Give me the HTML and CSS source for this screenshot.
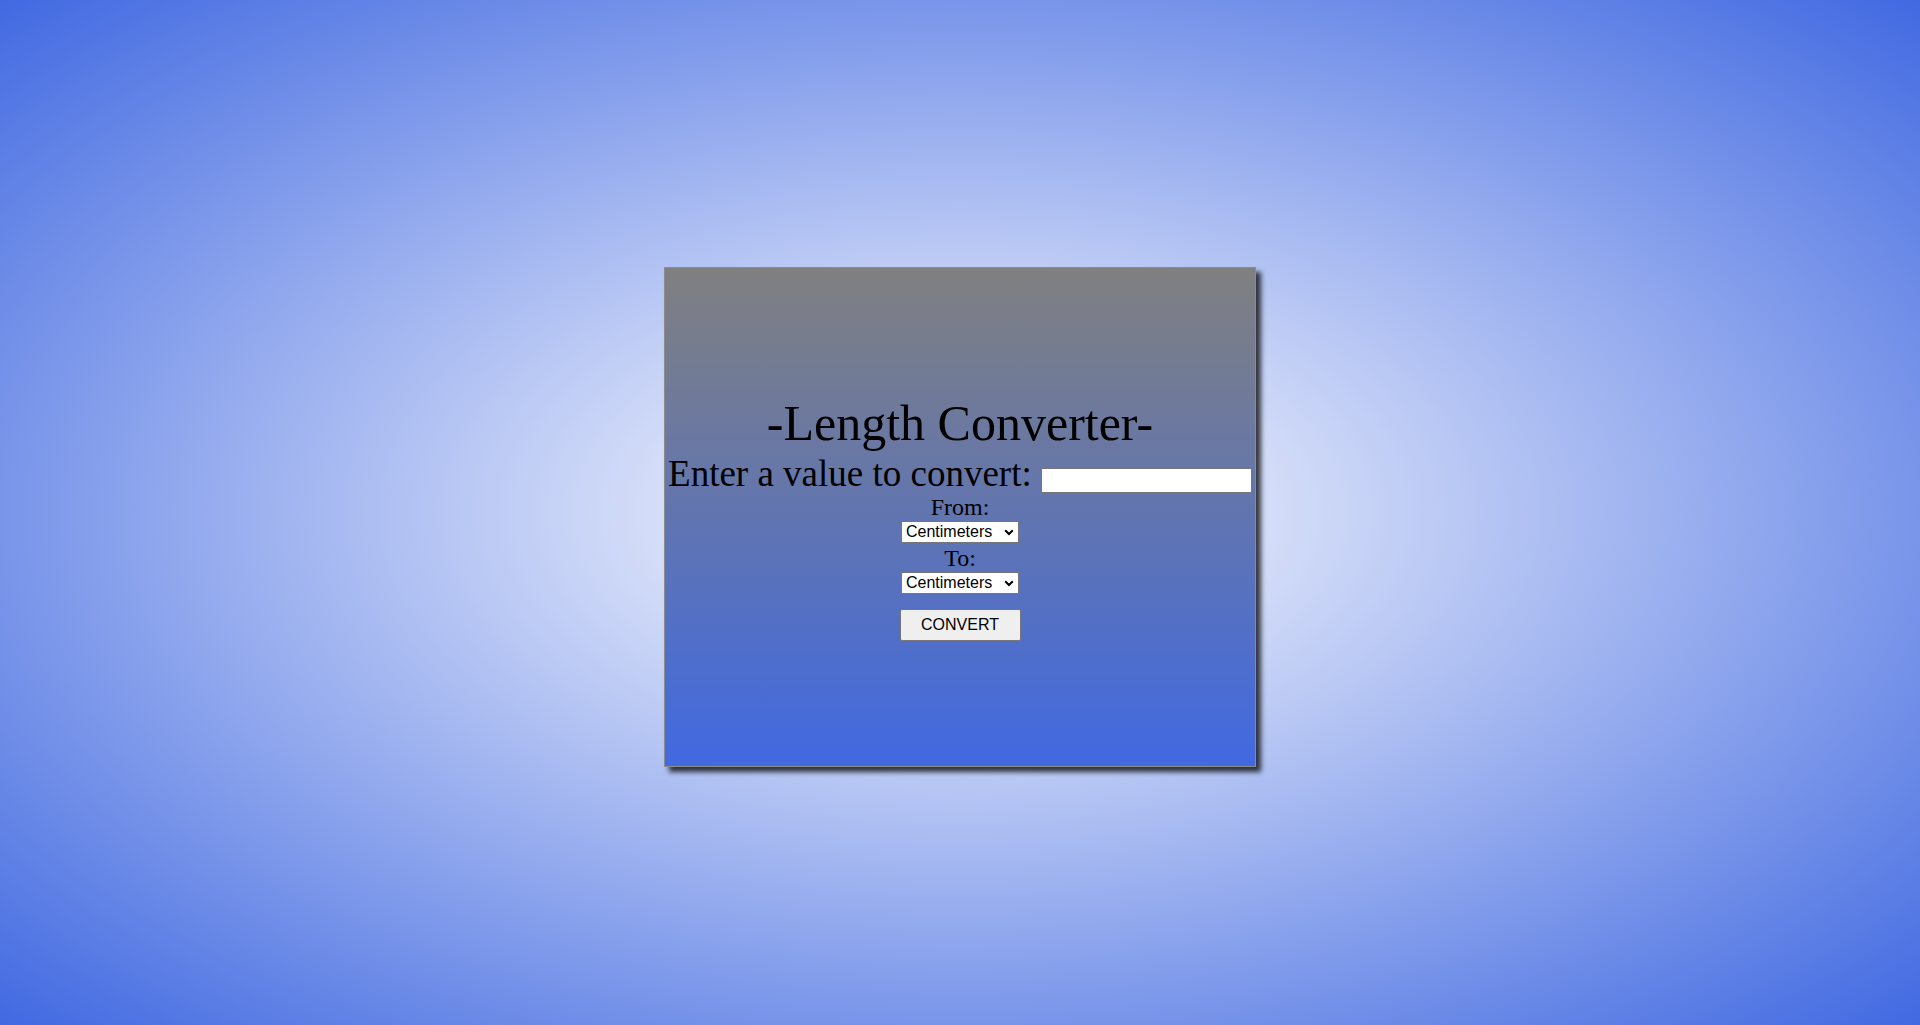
FILE: index.html
```html
<!DOCTYPE html>
<html lang="en">
<head>
<meta charset="utf-8">
<title>Length Converter</title>
<link rel="stylesheet" href="styles.css">
</head>
<body>
  <main class="card">
    <h1 class="title">-Length Converter-</h1>
    <div class="value-row">
      <label class="value-label" for="value">Enter a value to convert:</label> <input class="value-input" id="value" type="text">
    </div>
    <label class="unit-label unit-label-first" for="from">From:</label>
    <select class="unit-select" id="from">
      <option>Centimeters</option>
      <option>Meters</option>
      <option>Kilometers</option>
      <option>Inches</option>
      <option>Feet</option>
    </select>
    <label class="unit-label" for="to">To:</label>
    <select class="unit-select" id="to">
      <option>Centimeters</option>
      <option>Meters</option>
      <option>Kilometers</option>
      <option>Inches</option>
      <option>Feet</option>
    </select>
    <button class="convert-btn" type="button">CONVERT</button>
  </main>
</body>
</html>
```

FILE: styles.css
```css
html, body {
  margin: 0;
  height: 100%;
}

body {
  box-sizing: border-box;
  padding-top: 9px;
  display: flex;
  align-items: center;
  justify-content: center;
  background: radial-gradient(white, royalblue);
  font-family: "Liberation Serif", "Times New Roman", serif;
  color: #000;
}

.card {
  box-sizing: border-box;
  width: 592px;
  height: 500px;
  border: 1px solid #8c8c8c;
  background: linear-gradient(gray, royalblue);
  box-shadow: 5px 5px 5px rgba(0, 0, 0, 0.75);
  display: flex;
  flex-direction: column;
  align-items: center;
  justify-content: center;
  text-align: center;
}

.title {
  margin: 0;
  padding-top: 4px;
  font-size: 50px;
  font-weight: normal;
  line-height: 53px;
}

.value-row {
  white-space: nowrap;
  font-size: 37px;
  line-height: 41px;
  margin-top: 3px;
}

.value-label {
  font-size: 37px;
}

.value-input {
  box-sizing: border-box;
  width: 211px;
  height: 25px;
  font-family: "Liberation Sans", Arial, sans-serif;
  font-size: 16px;
  padding: 1px 2px;
  border: 1px solid #767676;
  background: #fff;
  vertical-align: 1px;
}

.unit-label {
  font-size: 24px;
  line-height: 27px;
  margin-top: 2px;
}

.unit-label-first {
  margin-top: 0;
}

.unit-select {
  box-sizing: border-box;
  -webkit-appearance: none;
  appearance: none;
  width: 118px;
  height: 22px;
  font-family: "Liberation Sans", Arial, sans-serif;
  font-size: 16px;
  line-height: 18px;
  color: #000;
  background-color: #fff;
  background-image: url("data:image/svg+xml,%3Csvg xmlns='http://www.w3.org/2000/svg' width='10' height='7' viewBox='0 0 10 7'%3E%3Cpath d='M1.2 1.2 L5 5 L8.8 1.2' fill='none' stroke='%23000' stroke-width='2'/%3E%3C/svg%3E");
  background-repeat: no-repeat;
  background-position: right 4px center;
  background-size: 10px 7px;
  border: 1px solid #767676;
  border-radius: 0;
  padding: 1px 18px 1px 4px;
}

.convert-btn {
  box-sizing: border-box;
  margin-top: 15px;
  width: 121px;
  height: 32px;
  font-family: "Liberation Sans", Arial, sans-serif;
  font-size: 16px;
  color: #000;
  background: #efefef;
  border: 1px solid #767676;
  border-radius: 2px;
  padding: 0 6px;
}
```
